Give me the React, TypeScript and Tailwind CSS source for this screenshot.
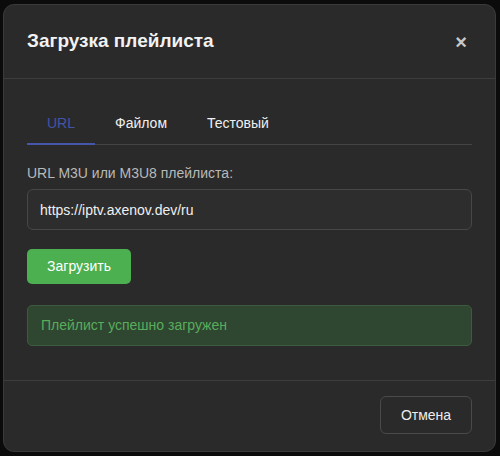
import { useState } from "react";

const tabs = ["URL", "Файлом", "Тестовый"];

export default function App() {
  const [active, setActive] = useState(0);
  const [url, setUrl] = useState("https://iptv.axenov.dev/ru");

  return (
    <div
      className="min-h-[456px] w-[500px] bg-[#0b0b0b] pl-[3px] pt-[4px] text-[#e6e6e6]"
      style={{ fontFamily: '"Liberation Sans", Arial, sans-serif' }}
    >
      <div className="flex h-[448px] w-[493px] flex-col rounded-[11px] border border-[#3a3a3a] bg-[#2a2a2a]">
        {/* Header */}
        <div className="flex h-[74px] items-center justify-between border-b border-[#3d3d3d] pl-[23px] pr-[28px]">
          <h2 className="text-[19px] font-bold text-[#f2f2f2]">Загрузка плейлиста</h2>
          <button className="text-[20px] font-bold leading-none text-[#c8c8c8]">×</button>
        </div>

        {/* Body */}
        <div className="flex flex-1 flex-col px-[23px] pt-[24px]">
          <div className="flex border-b border-[#444]">
            {tabs.map((t, i) => (
              <button
                key={t}
                onClick={() => setActive(i)}
                className={`-mb-px border-b-2 px-[20px] py-[10px] text-[14px] leading-[20px] ${
                  active === i
                    ? "border-[#4556a8] text-[#4254a8]"
                    : "border-transparent text-[#f0f0f0]"
                }`}
              >
                {t}
              </button>
            ))}
          </div>

          <label className="mt-[20px] text-[14px] leading-[16px] text-[#b9b9b9]">
            URL M3U или M3U8 плейлиста:
          </label>
          <input
            value={url}
            onChange={(e) => setUrl(e.target.value)}
            className="mt-[8px] h-[41px] w-full rounded-[6px] border border-[#474747] bg-[#2d2d2d] px-[12px] text-[14px] text-[#f0f0f0] outline-none"
          />

          <button className="mt-[19px] h-[35px] w-[104px] rounded-[5px] bg-[#4caf50] text-[14px] text-white">
            Загрузить
          </button>

          <div className="mt-[21px] flex h-[41px] items-center rounded-[5px] border border-[#3d5c3f] bg-[#2f4631] px-[13px] text-[14px] text-[#58ad5c]">
            Плейлист успешно загружен
          </div>
        </div>

        {/* Footer */}
        <div className="flex h-[71px] items-start justify-end border-t border-[#3d3d3d] pr-[23px] pt-[15px]">
          <button className="h-[38px] w-[92px] rounded-[6px] border border-[#4a4a4a] bg-transparent text-[14px] text-[#ededed]">
            Отмена
          </button>
        </div>
      </div>
    </div>
  );
}
